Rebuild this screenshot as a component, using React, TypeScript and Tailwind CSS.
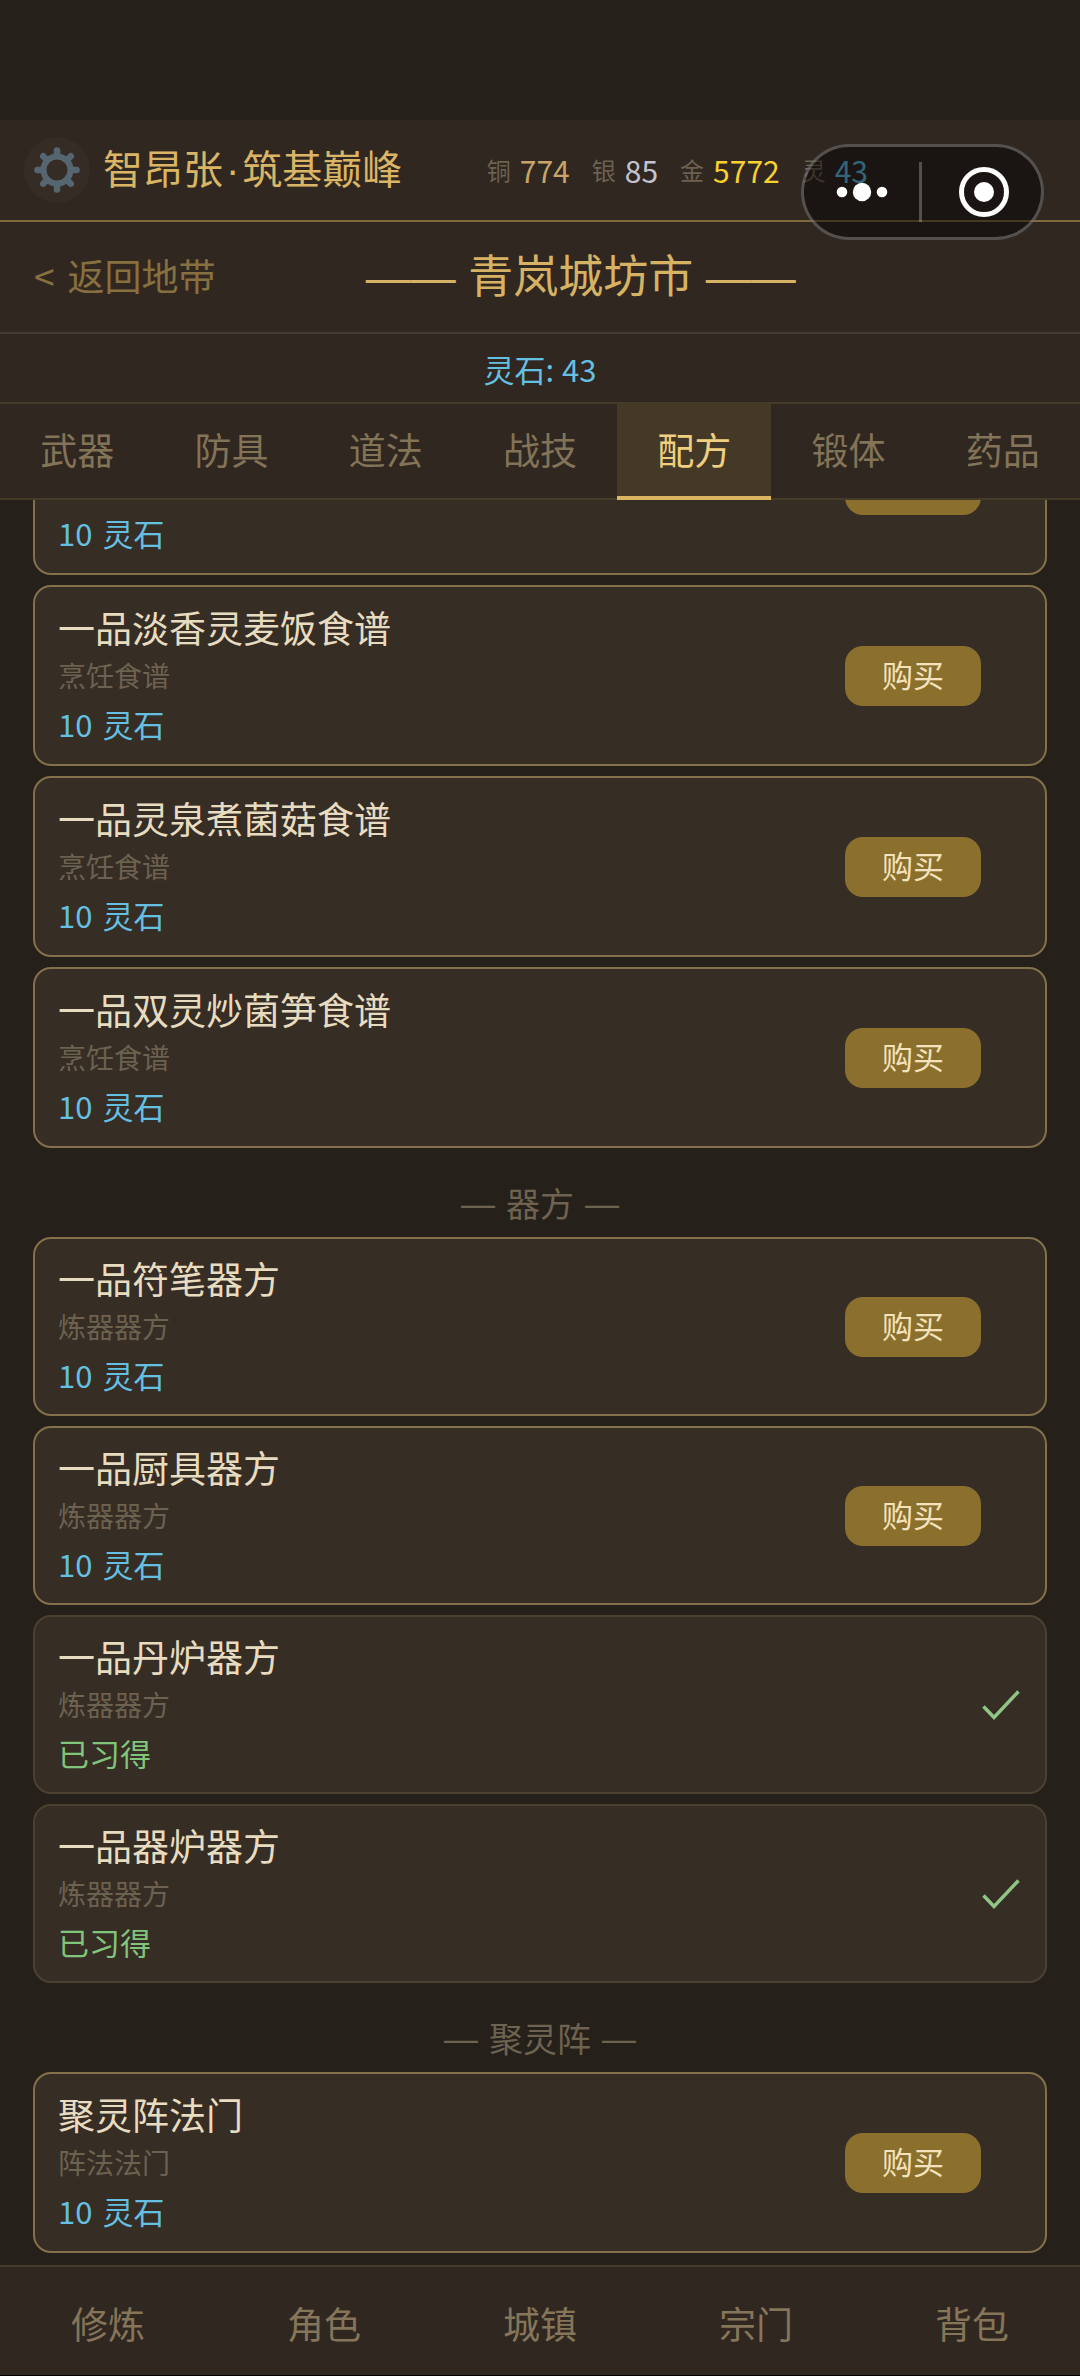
import { useLayoutEffect, useRef, useState } from 'react';

type Item = {
  name: string;
  kind: string;
  price?: number;
  learned?: boolean;
};

type Section = {
  title?: string;
  rowClass: string;
  items: Item[];
};

const tabs = ['武器', '防具', '道法', '战技', '配方', '锻体', '药品'];

const navItems = ['修炼', '角色', '城镇', '宗门', '背包'];

const wallet = [
  { label: '铜', value: 774, color: 'text-[#c9a468]' },
  { label: '银', value: 85, color: 'text-[#c3c3cf]' },
  { label: '金', value: 5772, color: 'text-[#f8d030]' },
  { label: '灵', value: 43, color: 'text-[#5cb8dc]' },
];

const sections: Section[] = [
  {
    rowClass: 'min-h-[181px]',
    items: [
      { name: '一品食谱', kind: '烹饪食谱', price: 10 },
      { name: '一品淡香灵麦饭食谱', kind: '烹饪食谱', price: 10 },
      { name: '一品灵泉煮菌菇食谱', kind: '烹饪食谱', price: 10 },
      { name: '一品双灵炒菌笋食谱', kind: '烹饪食谱', price: 10 },
    ],
  },
  {
    title: '器方',
    rowClass: 'min-h-[179px]',
    items: [
      { name: '一品符笔器方', kind: '炼器器方', price: 10 },
      { name: '一品厨具器方', kind: '炼器器方', price: 10 },
      { name: '一品丹炉器方', kind: '炼器器方', learned: true },
      { name: '一品器炉器方', kind: '炼器器方', learned: true },
    ],
  },
  {
    title: '聚灵阵',
    rowClass: 'min-h-[181px]',
    items: [{ name: '聚灵阵法门', kind: '阵法法门', price: 10 }],
  },
];

const teeth = [0, 45, 90, 135, 180, 225, 270, 315];

function GearIcon() {
  return (
    <svg width="46" height="46" viewBox="0 0 46 46" fill="none" aria-hidden="true">
      <circle cx="23" cy="23" r="13.5" stroke="#566671" strokeWidth="6" />
      {teeth.map((deg) => (
        <path
          key={deg}
          d="M23 8.5V3.5"
          stroke="#566671"
          strokeWidth="6.5"
          strokeLinecap="round"
          transform={`rotate(${deg} 23 23)`}
        />
      ))}
    </svg>
  );
}

function CheckIcon() {
  return (
    <svg width="40" height="32" viewBox="0 0 40 32" fill="none" role="img" aria-label="已习得">
      <path d="M2.5 17.5L13 28.5L37.5 2.5" stroke="#8fc585" strokeWidth="3.5" />
    </svg>
  );
}

function ItemCard({ item, rowClass }: { item: Item; rowClass: string }) {
  return (
    <li
      className={`flex items-center justify-between rounded-[18px] border-2 bg-[#362d25] pl-[23px] pr-6 ${rowClass} ${
        item.learned ? 'border-[#4c4031]' : 'border-[#84704a]'
      }`}
    >
      <div>
        <h3 className="text-[37px] leading-[50px] text-[#e8dcc0]">{item.name}</h3>
        <p className="text-[28px] leading-[47px] text-[#6d6150]">{item.kind}</p>
        {item.learned ? (
          <p className="text-[31px] leading-[50px] text-[#80c57a]">已习得</p>
        ) : (
          <p className="flex gap-[10px] text-[31px] leading-[50px] text-[#64bfe0]">
            <span>{item.price}</span>
            <span>灵石</span>
          </p>
        )}
      </div>
      {item.learned ? (
        <CheckIcon />
      ) : (
        <button
          type="button"
          className="mr-10 h-[60px] w-[136px] rounded-[18px] bg-[#8b6f2d] pb-1 text-[31px] leading-none text-[#f3e2bc]"
        >
          购买
        </button>
      )}
    </li>
  );
}

export default function App() {
  const [activeTab, setActiveTab] = useState('配方');
  const listRef = useRef<HTMLElement>(null);

  // Open the list at its last entries
  useLayoutEffect(() => {
    if (listRef.current) {
      listRef.current.scrollTop = listRef.current.scrollHeight;
    }
  }, []);

  return (
    <div className="relative flex h-screen flex-col bg-[#25201a] pt-[120px] font-['Noto_Sans_CJK_SC',sans-serif]">
      {/* Player bar */}
      <header className="flex h-[102px] shrink-0 items-center justify-between border-b-2 border-[#80693f] bg-[#302721] pl-6 pr-[212px]">
        <div className="flex items-center gap-[13px]">
          <button
            type="button"
            aria-label="设置"
            className="flex h-[66px] w-[66px] items-center justify-center rounded-full bg-[#362c26]"
          >
            <GearIcon />
          </button>
          <span className="whitespace-nowrap pb-1 text-[40px] leading-none text-[#dab565]">
            智昂张<span className="mx-[3px] font-['Liberation_Sans',sans-serif]">·</span>筑基巅峰
          </span>
        </div>
        <dl className="flex items-center gap-[22px]">
          {wallet.map((coin) => (
            <div key={coin.label} className="flex items-center gap-[9px]">
              <dt className="text-[24px] leading-none text-[#6d6150]">{coin.label}</dt>
              <dd className={`text-[30px] leading-none ${coin.color}`}>{coin.value}</dd>
            </div>
          ))}
        </dl>
      </header>

      {/* Mini program capsule */}
      <div className="absolute right-9 top-36 flex h-24 w-[243px] items-center rounded-full border-[3px] border-white/25 bg-black/45">
        <button type="button" aria-label="更多" className="flex h-full flex-1 items-center justify-center">
          <svg width="52" height="20" viewBox="0 0 52 20" fill="#fff">
            <circle cx="6" cy="10" r="5.3" />
            <circle cx="26" cy="10" r="9.2" />
            <circle cx="46" cy="10" r="5.3" />
          </svg>
        </button>
        <span className="h-[60px] w-[3px] bg-white/25" />
        <button type="button" aria-label="关闭" className="flex h-full flex-1 items-center justify-center pl-1">
          <svg width="52" height="52" viewBox="0 0 52 52" fill="none">
            <circle cx="26" cy="26" r="22.5" stroke="#fff" strokeWidth="5" />
            <circle cx="26" cy="26" r="10" fill="#fff" />
          </svg>
        </button>
      </div>

      {/* Market title */}
      <div className="flex h-28 shrink-0 items-center border-b-2 border-[#453b30] bg-[#302721] px-[34px] pb-1">
        <button type="button" className="flex gap-[13px] whitespace-nowrap text-[37px] leading-none text-[#87703f]">
          <span>&lt;</span>
          <span>返回地带</span>
        </button>
        <h1 className="flex-1 whitespace-nowrap text-center text-[45px] leading-none text-[#d6b264]">
          <span className="font-['Liberation_Sans',sans-serif]">—— </span>
          青岚城坊市
          <span className="font-['Liberation_Sans',sans-serif]"> ——</span>
        </h1>
        <span className="w-[100px]" />
      </div>

      <div className="flex h-[70px] shrink-0 items-center justify-center gap-2 border-b-2 border-[#463a29] bg-[#302721] text-[31px] leading-none text-[#64bfe0]">
        <span>灵石:</span>
        <span>43</span>
      </div>

      {/* Category tabs */}
      <div role="tablist" className="flex h-24 shrink-0 bg-[#302721]">
        {tabs.map((tab) => (
          <button
            key={tab}
            type="button"
            role="tab"
            aria-selected={activeTab === tab}
            onClick={() => setActiveTab(tab)}
            className={`flex-1 text-[37px] leading-none ${
              activeTab === tab
                ? 'border-b-4 border-[#dcb562] bg-[#443827] pb-[2px] text-[#f0d080]'
                : 'border-b-2 border-[#463a29] pb-1 text-[#837357]'
            }`}
          >
            {tab}
          </button>
        ))}
      </div>

      {/* Goods */}
      <main
        ref={listRef}
        className="min-h-0 flex-1 overflow-y-auto px-[33px] pb-3 [scrollbar-width:none]"
      >
        {sections.map((section) => (
          <section key={section.items[0].name}>
            {section.title && (
              <h2 className="flex h-[89px] items-center justify-center gap-[11px] pt-5 text-[34px] leading-none text-[#6e6251]">
                <span className="font-['Liberation_Sans',sans-serif]">—</span>
                {section.title}
                <span className="font-['Liberation_Sans',sans-serif]">—</span>
              </h2>
            )}
            <ul className="flex flex-col gap-[10px]">
              {section.items.map((item) => (
                <ItemCard key={item.name} item={item} rowClass={section.rowClass} />
              ))}
            </ul>
          </section>
        ))}
      </main>

      {/* Bottom navigation */}
      <nav className="flex h-[111px] shrink-0 border-b border-t-2 border-b-black border-t-[#463a29] bg-[#302721] pt-1">
        {navItems.map((label) => (
          <a
            key={label}
            href="#"
            className="flex flex-1 items-center justify-center text-[37px] leading-none text-[#857559]"
          >
            {label}
          </a>
        ))}
      </nav>
    </div>
  );
}
